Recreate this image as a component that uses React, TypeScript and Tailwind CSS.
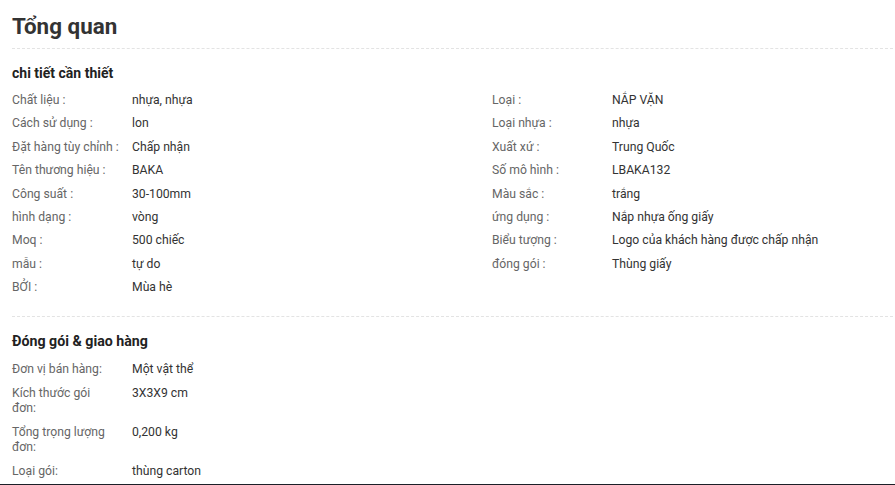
const details: [string, string][] = [
  ["Chất liệu :", "nhựa, nhựa"],
  ["Cách sử dụng :", "lon"],
  ["Đặt hàng tùy chỉnh :", "Chấp nhận"],
  ["Tên thương hiệu :", "BAKA"],
  ["Công suất :", "30-100mm"],
  ["hình dạng :", "vòng"],
  ["Moq :", "500 chiếc"],
  ["mẫu :", "tự do"],
  ["BỞI :", "Mùa hè"],
];

const details2: [string, string][] = [
  ["Loại :", "NẮP VẶN"],
  ["Loại nhựa :", "nhựa"],
  ["Xuất xứ :", "Trung Quốc"],
  ["Số mô hình :", "LBAKA132"],
  ["Màu sắc :", "trắng"],
  ["ứng dụng :", "Nắp nhựa ống giấy"],
  ["Biểu tượng :", "Logo của khách hàng được chấp nhận"],
  ["đóng gói :", "Thùng giấy"],
];

const packing: [string, string][] = [
  ["Đơn vị bán hàng:", "Một vật thể"],
  ["Kích thước gói đơn:", "3X3X9 cm"],
  ["Tổng trọng lượng đơn:", "0,200 kg"],
  ["Loại gói:", "thùng carton"],
];

function DetailList({ rows }: { rows: [string, string][] }) {
  return (
    <div className="flex flex-col">
      {rows.map(([label, value]) => (
        <div key={label} className="flex text-[12.2px] leading-[23.4px]">
          <span className="w-[120px] shrink-0 text-[#666]">{label}</span>
          <span className="text-[#333]">{value}</span>
        </div>
      ))}
    </div>
  );
}

export default function App() {
  return (
    <div
      className="bg-white w-[895px] overflow-hidden"
      style={{ fontFamily: "Roboto, 'Noto Sans', sans-serif" }}
    >
      <div className="pl-3 pr-[2px]">
        {/* TITLE */}
        <h1 className="pt-[10px] pb-[6px] text-[22.4px] leading-[32px] font-bold text-[#333]">
          Tổng quan
        </h1>
        <div className="border-t border-dashed border-[#e3e3e3]" />

        {/* DETAILS */}
        <h2 className="mt-[14px] text-[14px] leading-[20px] font-bold text-[#222]">
          chi tiết cần thiết
        </h2>
        <div className="mt-[6px] grid grid-cols-[480px_1fr]">
          <DetailList rows={details} />
          <DetailList rows={details2} />
        </div>
        <div className="mt-[16px] border-t border-dashed border-[#e3e3e3]" />

        {/* PACKING */}
        <h2 className="mt-[14px] text-[14.2px] leading-[20px] font-bold text-[#222]">
          Đóng gói &amp; giao hàng
        </h2>
        <div className="mt-[7px] flex flex-col">
          {packing.map(([label, value]) => (
            <div key={label} className="flex py-[4.5px] text-[12.2px] leading-[15px] last:pb-[2px]">
              <span className="w-[120px] shrink-0 pr-[20px] text-[#666]">{label}</span>
              <span className="text-[#333]">{value}</span>
            </div>
          ))}
        </div>
      </div>
      <div className="mt-[3px] h-px bg-[#1b1f27]" />
    </div>
  );
}
